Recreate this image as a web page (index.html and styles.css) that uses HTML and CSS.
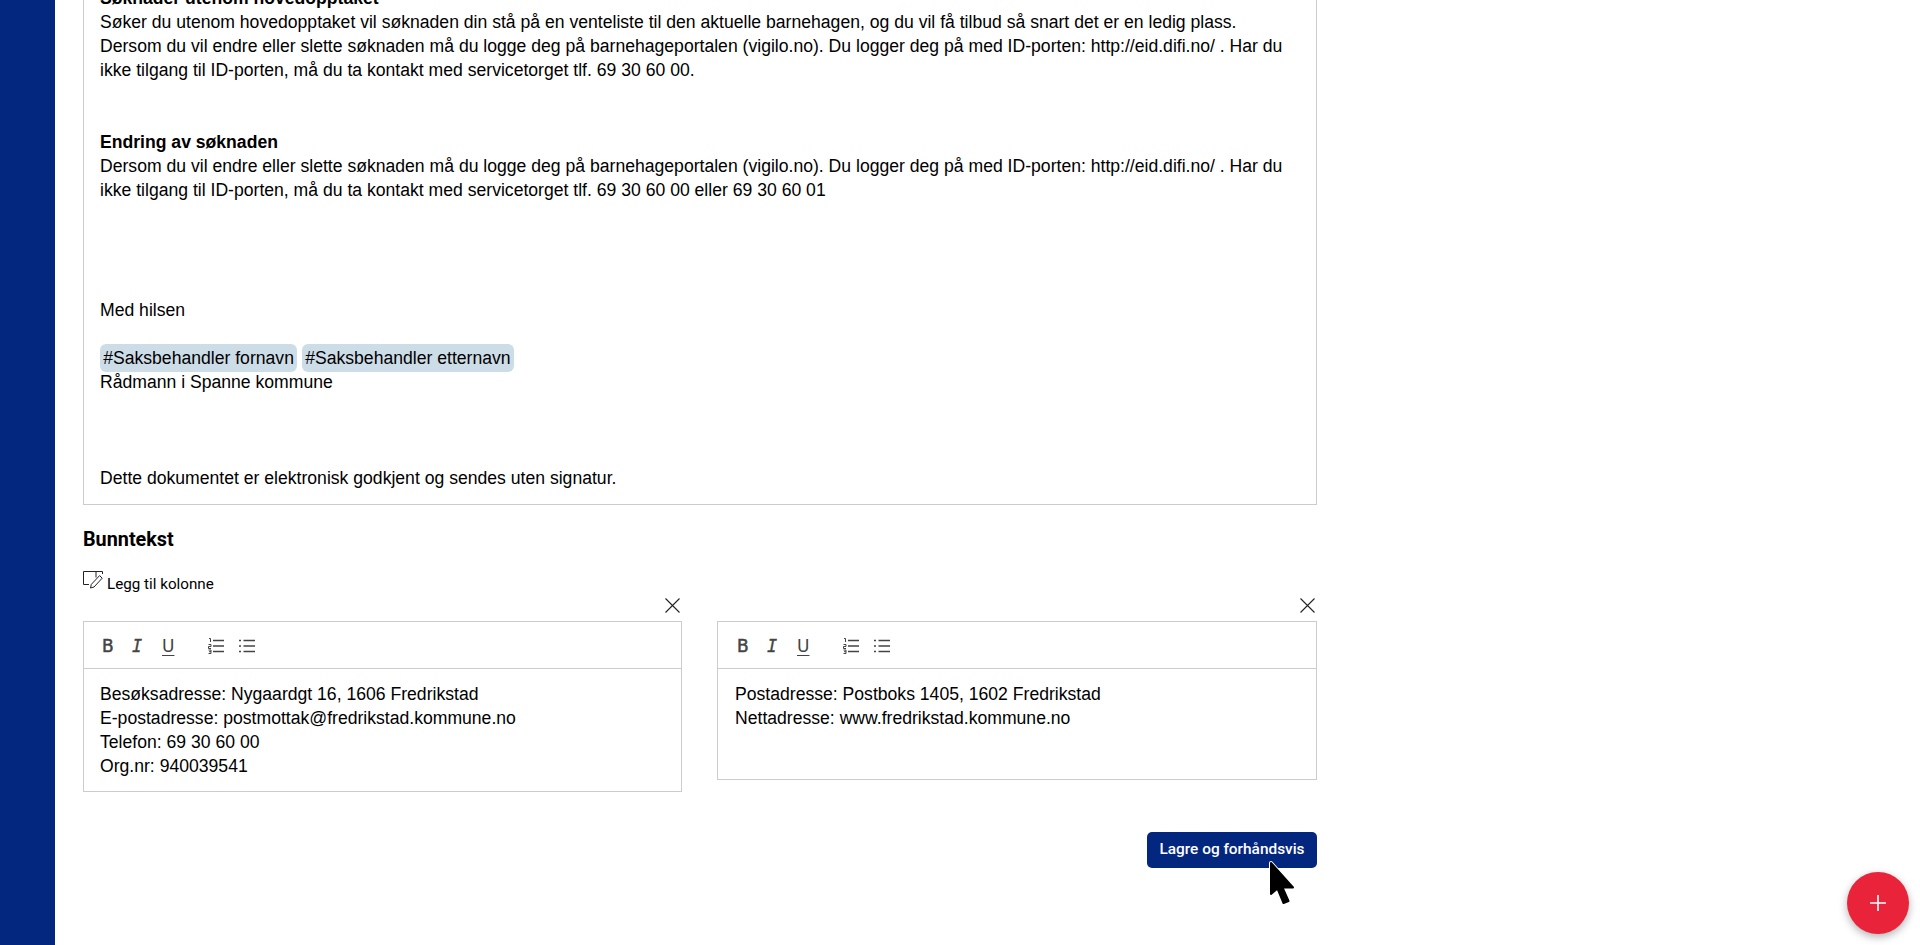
FILE: index.html
```html
<!doctype html>
<html>
<head>
<meta charset="utf-8">
<meta name="viewport" content="width=device-width, initial-scale=1.0">
<link rel="stylesheet" href="styles.css">
<title>Bunntekst</title>
</head>
<body>
<div class="sidebar"></div>
<main class="main">
    <section class="letter">
        <p><strong>Søknader utenom hovedopptaket</strong></p>
        <p>Søker du utenom hovedopptaket vil søknaden din stå på en venteliste til den aktuelle barnehagen, og du vil få tilbud så snart det er en ledig plass.</p>
        <p>Dersom du vil endre eller slette søknaden må du logge deg på barnehageportalen (vigilo.no). Du logger deg på med ID-porten: http://eid.difi.no/ . Har du ikke tilgang til ID-porten, må du ta kontakt med servicetorget tlf. 69 30 60 00.</p>
        <p class="blank"></p>
        <p class="blank"></p>
        <p><strong>Endring av søknaden</strong></p>
        <p>Dersom du vil endre eller slette søknaden må du logge deg på barnehageportalen (vigilo.no). Du logger deg på med ID-porten: http://eid.difi.no/ . Har du ikke tilgang til ID-porten, må du ta kontakt med servicetorget tlf. 69 30 60 00 eller 69 30 60 01</p>
        <p class="blank"></p>
        <p class="blank"></p>
        <p class="blank"></p>
        <p class="blank"></p>
        <p>Med hilsen</p>
        <p class="blank"></p>
        <p><span class="tag">#Saksbehandler fornavn</span> <span class="tag">#Saksbehandler etternavn</span></p>
        <p>Rådmann i Spanne kommune</p>
        <p class="blank"></p>
        <p class="blank"></p>
        <p class="blank"></p>
        <p>Dette dokumentet er elektronisk godkjent og sendes uten signatur.</p>
    </section>

    <h3 class="section-title">Bunntekst</h3>
    <div class="add-column">
        <svg class="add-icon" width="20" height="18" viewBox="0 0 20 18" fill="none" stroke="#222" stroke-width="1">
            <path d="M13 .5H.5v13H6"/>
            <path d="M13 .5h6.500v2.500M13 .5v6"/>
            <path d="M7.500 17l.8-3.600L16.600 4.600l2.600 2.600-8.200 8.800z"/>
        </svg>
        <span class="add-label">Legg til kolonne</span>
    </div>

    <div class="columns">
        <div class="column">
            <div class="column-head">
                <svg width="15" height="15" viewBox="0 0 15 15" stroke="#222" stroke-width="1.1"><path d="M.5.5l14 14M14.500.5l-14 14"/></svg>
            </div>
            <div class="editor">
                <div class="toolbar">
                    <span class="tb-btn tb-bold">B</span>
                    <span class="tb-btn tb-italic">I</span>
                    <span class="tb-btn tb-under">U</span>
                    <span class="tb-btn tb-list">
                        <svg width="16" height="16" viewBox="0 0 16 16" stroke="#444">
                            <path stroke-width="1.500" d="M5 2.500h11M5 8h11M5 13.500h11"/>
                            <path stroke-width="1" d="M1 .5h1.500v3.500M.5 6.500h2.500v2H.5v2H3M.5 12h2.500v3.500H.5M1 13.700h2" fill="none"/>
                        </svg>
                    </span>
                    <span class="tb-btn">
                        <svg width="16" height="16" viewBox="0 0 16 16" stroke="#444">
                            <path stroke-width="1.500" d="M4.500 2.500H16M4.500 8H16M4.500 13.500H16M0 2.500h2M0 8h2M0 13.500h2"/>
                        </svg>
                    </span>
                </div>
                <div class="editor-text">
                    <p>Besøksadresse: Nygaardgt 16, 1606 Fredrikstad</p>
                    <p>E-postadresse: postmottak@fredrikstad.kommune.no</p>
                    <p>Telefon: 69 30 60 00</p>
                    <p>Org.nr: 940039541</p>
                </div>
            </div>
        </div>
        <div class="column column-right">
            <div class="column-head">
                <svg width="15" height="15" viewBox="0 0 15 15" stroke="#222" stroke-width="1.1"><path d="M.5.5l14 14M14.500.5l-14 14"/></svg>
            </div>
            <div class="editor">
                <div class="toolbar">
                    <span class="tb-btn tb-bold">B</span>
                    <span class="tb-btn tb-italic">I</span>
                    <span class="tb-btn tb-under">U</span>
                    <span class="tb-btn tb-list">
                        <svg width="16" height="16" viewBox="0 0 16 16" stroke="#444">
                            <path stroke-width="1.500" d="M5 2.500h11M5 8h11M5 13.500h11"/>
                            <path stroke-width="1" d="M1 .5h1.500v3.500M.5 6.500h2.500v2H.5v2H3M.5 12h2.500v3.500H.5M1 13.700h2" fill="none"/>
                        </svg>
                    </span>
                    <span class="tb-btn">
                        <svg width="16" height="16" viewBox="0 0 16 16" stroke="#444">
                            <path stroke-width="1.500" d="M4.500 2.500H16M4.500 8H16M4.500 13.500H16M0 2.500h2M0 8h2M0 13.500h2"/>
                        </svg>
                    </span>
                </div>
                <div class="editor-text">
                    <p>Postadresse: Postboks 1405, 1602 Fredrikstad</p>
                    <p>Nettadresse: www.fredrikstad.kommune.no</p>
                </div>
            </div>
        </div>
    </div>

    <div class="actions">
        <button class="btn-save">Lagre og forhåndsvis</button>
    </div>
</main>

<button class="fab">
    <svg width="16" height="16" viewBox="0 0 16 16" stroke="#fff" stroke-width="1.600"><path d="M8 0v16M0 8h16"/></svg>
</button>

<svg class="cursor" width="32" height="48" viewBox="0 0 32 48">
    <path d="M3 3v31l6.500-5.500L15.500 43l5-2-6-13.500H25z" fill="#000" stroke="#fff" stroke-width="4" stroke-linejoin="round"/>
    <path d="M3 3v31l6.500-5.500L15.500 43l5-2-6-13.500H25z" fill="#000" stroke="#000" stroke-width="2" stroke-linejoin="round"/>
</svg>
</body>
</html>
```

FILE: styles.css
```css
html, body {
    height: 100%;
}
body {
    margin: 0;
    display: flex;
    height: 945px;
    overflow: hidden;
    background-color: white;
    color: #000;
    font-family: "Liberation Sans", Arial, sans-serif;
    font-size: 17.6px;
    line-height: 24px;
}
p {
    margin: 0;
}
.blank {
    height: 24px;
}
.sidebar {
    flex: 0 0 55px;
    background-color: #03267f;
}
.main {
    flex: 0 0 1234px;
    margin-left: 28px;
    margin-top: -17px;
}

.letter {
    border: 1px solid #ccc;
    padding: 2px 16px 14px 16px;
}
.tag {
    background-color: #cddde8;
    border-radius: 6px;
    padding: 4px 3.2px;
}

.section-title {
    margin: 23px 0 0 0;
    font-family: Roboto, sans-serif;
    font-size: 19.8px;
    line-height: 24px;
    font-weight: 700;
}
.add-column {
    display: flex;
    align-items: flex-start;
    gap: 4px;
    margin-top: 19px;
    font-family: Roboto, sans-serif;
    font-size: 15.2px;
    line-height: 18px;
}
.add-label {
    margin-top: 4px;
}
.add-icon {
    display: block;
}

.columns {
    display: grid;
    grid-template-columns: 599px 600px;
    gap: 35px;
    align-items: start;
}
.column-head {
    display: flex;
    justify-content: flex-end;
    padding: 5px 2px 8px 0;
    height: 15px;
}

.editor {
    border: 1px solid #ccc;
}
.toolbar {
    display: flex;
    align-items: center;
    height: 47px;
    padding: 2px 0 0 18px;
    box-sizing: border-box;
    border-bottom: 1px solid #ccc;
    color: #444;
    font-family: "DejaVu Sans", sans-serif;
    font-size: 17px;
}
.tb-btn {
    display: flex;
    align-items: center;
    width: 30px;
}
.tb-bold {
    -webkit-text-stroke: 0.5px #444;
}
.tb-italic {
    font-family: "DejaVu Sans Mono", monospace;
    font-style: italic;
    -webkit-text-stroke: 0.3px #444;
}
.tb-under {
    width: 46px;
    text-decoration: underline;
    text-underline-offset: 3px;
}
.tb-list {
    width: 31px;
}
.editor-text {
    padding: 13px 16px;
    min-height: 84px;
}
.column-right .toolbar {
    padding-left: 19px;
}
.column-right .editor-text {
    padding-left: 17px;
}

.actions {
    display: flex;
    justify-content: flex-end;
    margin-top: 40px;
}
.btn-save {
    width: 170px;
    height: 36px;
    padding: 0 0 2px 0;
    border: 0;
    border-radius: 5px;
    background-color: #03267f;
    color: white;
    font-family: Roboto, sans-serif;
    font-size: 15.4px;
    font-weight: 500;
}

.fab {
    position: fixed;
    left: 1847px;
    top: 872px;
    width: 62px;
    height: 62px;
    display: flex;
    align-items: center;
    justify-content: center;
    padding: 0;
    border: 0;
    border-radius: 50%;
    background-color: #e8233a;
    box-shadow: 0 3px 8px rgba(0, 0, 0, 0.3);
}
.cursor {
    position: fixed;
    left: 1268px;
    top: 860px;
}
```
